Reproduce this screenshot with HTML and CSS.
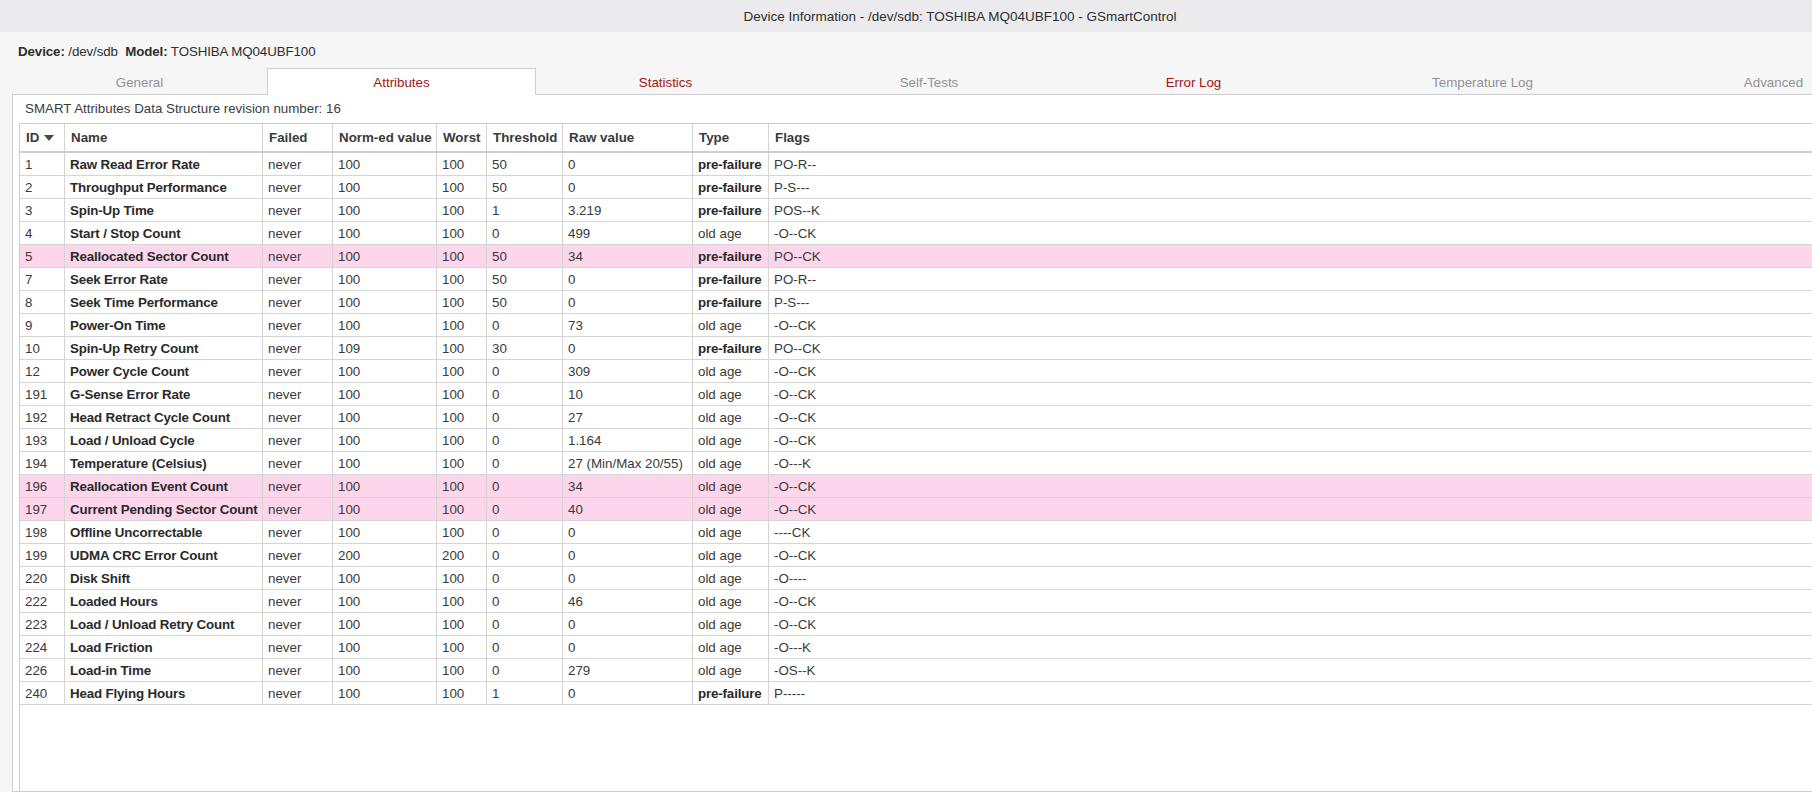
FILE: index.html
```html
<!DOCTYPE html>
<html lang="en">
<head>
<meta charset="utf-8">
<title>Device Information - /dev/sdb: TOSHIBA MQ04UBF100 - GSmartControl</title>
<link rel="stylesheet" href="styles.css">
</head>
<body>
<div class="window">
  <header class="titlebar">Device Information - /dev/sdb: TOSHIBA MQ04UBF100 - GSmartControl</header>
  <div class="devline"><b>Device:</b> /dev/sdb&nbsp; <b>Model:</b> TOSHIBA MQ04UBF100</div>
  <div class="notebook">
    <div class="tabs">
      <div class="tab t-general">General</div>
      <div class="tab t-attr active warn">Attributes</div>
      <div class="tab t-stat warn">Statistics</div>
      <div class="tab t-self">Self-Tests</div>
      <div class="tab t-err warn">Error Log</div>
      <div class="tab t-temp">Temperature Log</div>
      <div class="tab t-adv">Advanced</div>
    </div>
    <div class="page">
      <div class="revision">SMART Attributes Data Structure revision number: 16</div>
      <div class="frame">
        <div class="grid">
          <div class="row head">
            <div class="c">ID <svg class="sort" width="10" height="6" viewBox="0 0 10 6"><path d="M0 0H10L5 6Z" fill="#4a4a4a"/></svg></div>
            <div class="c">Name</div>
            <div class="c">Failed</div>
            <div class="c">Norm-ed value</div>
            <div class="c">Worst</div>
            <div class="c">Threshold</div>
            <div class="c">Raw value</div>
            <div class="c">Type</div>
            <div class="c">Flags</div>
          </div>
          <div class="row"><div class="c">1</div><div class="c b">Raw Read Error Rate</div><div class="c">never</div><div class="c">100</div><div class="c">100</div><div class="c">50</div><div class="c">0</div><div class="c b">pre-failure</div><div class="c">PO-R--</div></div>
          <div class="row"><div class="c">2</div><div class="c b">Throughput Performance</div><div class="c">never</div><div class="c">100</div><div class="c">100</div><div class="c">50</div><div class="c">0</div><div class="c b">pre-failure</div><div class="c">P-S---</div></div>
          <div class="row"><div class="c">3</div><div class="c b">Spin-Up Time</div><div class="c">never</div><div class="c">100</div><div class="c">100</div><div class="c">1</div><div class="c">3.219</div><div class="c b">pre-failure</div><div class="c">POS--K</div></div>
          <div class="row"><div class="c">4</div><div class="c b">Start / Stop Count</div><div class="c">never</div><div class="c">100</div><div class="c">100</div><div class="c">0</div><div class="c">499</div><div class="c">old age</div><div class="c">-O--CK</div></div>
          <div class="row hl"><div class="c">5</div><div class="c b">Reallocated Sector Count</div><div class="c">never</div><div class="c">100</div><div class="c">100</div><div class="c">50</div><div class="c">34</div><div class="c b">pre-failure</div><div class="c">PO--CK</div></div>
          <div class="row"><div class="c">7</div><div class="c b">Seek Error Rate</div><div class="c">never</div><div class="c">100</div><div class="c">100</div><div class="c">50</div><div class="c">0</div><div class="c b">pre-failure</div><div class="c">PO-R--</div></div>
          <div class="row"><div class="c">8</div><div class="c b">Seek Time Performance</div><div class="c">never</div><div class="c">100</div><div class="c">100</div><div class="c">50</div><div class="c">0</div><div class="c b">pre-failure</div><div class="c">P-S---</div></div>
          <div class="row"><div class="c">9</div><div class="c b">Power-On Time</div><div class="c">never</div><div class="c">100</div><div class="c">100</div><div class="c">0</div><div class="c">73</div><div class="c">old age</div><div class="c">-O--CK</div></div>
          <div class="row"><div class="c">10</div><div class="c b">Spin-Up Retry Count</div><div class="c">never</div><div class="c">109</div><div class="c">100</div><div class="c">30</div><div class="c">0</div><div class="c b">pre-failure</div><div class="c">PO--CK</div></div>
          <div class="row"><div class="c">12</div><div class="c b">Power Cycle Count</div><div class="c">never</div><div class="c">100</div><div class="c">100</div><div class="c">0</div><div class="c">309</div><div class="c">old age</div><div class="c">-O--CK</div></div>
          <div class="row"><div class="c">191</div><div class="c b">G-Sense Error Rate</div><div class="c">never</div><div class="c">100</div><div class="c">100</div><div class="c">0</div><div class="c">10</div><div class="c">old age</div><div class="c">-O--CK</div></div>
          <div class="row"><div class="c">192</div><div class="c b">Head Retract Cycle Count</div><div class="c">never</div><div class="c">100</div><div class="c">100</div><div class="c">0</div><div class="c">27</div><div class="c">old age</div><div class="c">-O--CK</div></div>
          <div class="row"><div class="c">193</div><div class="c b">Load / Unload Cycle</div><div class="c">never</div><div class="c">100</div><div class="c">100</div><div class="c">0</div><div class="c">1.164</div><div class="c">old age</div><div class="c">-O--CK</div></div>
          <div class="row"><div class="c">194</div><div class="c b">Temperature (Celsius)</div><div class="c">never</div><div class="c">100</div><div class="c">100</div><div class="c">0</div><div class="c">27 (Min/Max 20/55)</div><div class="c">old age</div><div class="c">-O---K</div></div>
          <div class="row hl"><div class="c">196</div><div class="c b">Reallocation Event Count</div><div class="c">never</div><div class="c">100</div><div class="c">100</div><div class="c">0</div><div class="c">34</div><div class="c">old age</div><div class="c">-O--CK</div></div>
          <div class="row hl"><div class="c">197</div><div class="c b">Current Pending Sector Count</div><div class="c">never</div><div class="c">100</div><div class="c">100</div><div class="c">0</div><div class="c">40</div><div class="c">old age</div><div class="c">-O--CK</div></div>
          <div class="row"><div class="c">198</div><div class="c b">Offline Uncorrectable</div><div class="c">never</div><div class="c">100</div><div class="c">100</div><div class="c">0</div><div class="c">0</div><div class="c">old age</div><div class="c">----CK</div></div>
          <div class="row"><div class="c">199</div><div class="c b">UDMA CRC Error Count</div><div class="c">never</div><div class="c">200</div><div class="c">200</div><div class="c">0</div><div class="c">0</div><div class="c">old age</div><div class="c">-O--CK</div></div>
          <div class="row"><div class="c">220</div><div class="c b">Disk Shift</div><div class="c">never</div><div class="c">100</div><div class="c">100</div><div class="c">0</div><div class="c">0</div><div class="c">old age</div><div class="c">-O----</div></div>
          <div class="row"><div class="c">222</div><div class="c b">Loaded Hours</div><div class="c">never</div><div class="c">100</div><div class="c">100</div><div class="c">0</div><div class="c">46</div><div class="c">old age</div><div class="c">-O--CK</div></div>
          <div class="row"><div class="c">223</div><div class="c b">Load / Unload Retry Count</div><div class="c">never</div><div class="c">100</div><div class="c">100</div><div class="c">0</div><div class="c">0</div><div class="c">old age</div><div class="c">-O--CK</div></div>
          <div class="row"><div class="c">224</div><div class="c b">Load Friction</div><div class="c">never</div><div class="c">100</div><div class="c">100</div><div class="c">0</div><div class="c">0</div><div class="c">old age</div><div class="c">-O---K</div></div>
          <div class="row"><div class="c">226</div><div class="c b">Load-in Time</div><div class="c">never</div><div class="c">100</div><div class="c">100</div><div class="c">0</div><div class="c">279</div><div class="c">old age</div><div class="c">-OS--K</div></div>
          <div class="row"><div class="c">240</div><div class="c b">Head Flying Hours</div><div class="c">never</div><div class="c">100</div><div class="c">100</div><div class="c">1</div><div class="c">0</div><div class="c b">pre-failure</div><div class="c">P-----</div></div>
        </div>
      </div>
    </div>
  </div>
</div>
</body>
</html>
```

FILE: styles.css
```css
html, body {
  margin: 0;
  padding: 0;
  overflow: hidden;
  background: #f6f6f6;
}

body {
  font-family: "Liberation Sans", Arial, sans-serif;
  font-size: 13.33px;
  color: #3d3d3d;
}

.window {
  width: 1920px;
  height: 792px;
  display: flex;
  flex-direction: column;
  background: #f6f6f6;
}

.titlebar {
  height: 32px;
  flex: none;
  display: flex;
  align-items: center;
  justify-content: center;
  background: #ebebed;
  color: #2e2e2e;
  font-size: 13.5px;
}

.devline {
  flex: none;
  height: 36px;
  box-sizing: border-box;
  padding: 12px 0 0 18px;
  line-height: 16px;
  color: #2e2e2e;
  white-space: pre;
  letter-spacing: -0.1px;
}

.devline b {
  font-weight: bold;
}

.notebook {
  flex: 1;
  margin: 0 12px;
  display: flex;
  flex-direction: column;
  min-height: 0;
}

.tabs {
  flex: none;
  display: flex;
  height: 26px;
  position: relative;
  z-index: 1;
}

.tab {
  flex: none;
  box-sizing: border-box;
  height: 26px;
  display: flex;
  align-items: center;
  justify-content: center;
  padding-top: 2px;
  color: #929292;
  white-space: nowrap;
}

.tab.warn {
  color: #a11515;
}

.tab.active {
  height: 27px;
  background: #ffffff;
  border: 1px solid #cdcdcd;
  border-bottom: none;
  padding-top: 1px;
}

.t-general { width: 255px; }
.t-attr { width: 269px; }
.t-stat { width: 259px; }
.t-self { width: 268px; }
.t-err { width: 261px; }
.t-temp { width: 317px; }
.t-adv { width: 265px; }

.page {
  flex: 1;
  min-height: 0;
  background: #ffffff;
  border: 1px solid #cdcdcd;
  display: flex;
  flex-direction: column;
}

.revision {
  flex: none;
  padding: 6px 0 0 12px;
  line-height: 16px;
  height: 16px;
  color: #3d3d3d;
}

.frame {
  flex: 1;
  margin: 6px 6px 0 6px;
  border: 1px solid #cdcdcd;
  border-bottom: none;
  background: #ffffff;
}

.grid {
  display: flex;
  flex-direction: column;
}

.row {
  display: grid;
  grid-template-columns: 45px 198px 70px 104px 50px 76px 130px 76px 1fr;
  height: 23px;
  box-sizing: border-box;
  border-bottom: 1px solid #d5d5d5;
}

.row.hl {
  background: #fdd6ec;
}

.row.head {
  height: 29px;
  border-bottom: 2px solid #cfcfcf;
  font-weight: bold;
  color: #3a3a3a;
}

.c {
  box-sizing: border-box;
  border-right: 1px solid #d5d5d5;
  padding: 0 5px;
  display: flex;
  align-items: center;
  white-space: nowrap;
  overflow: hidden;
  color: #3a3a3a;
}

.row .c:last-child {
  border-right: none;
}

.head .c {
  padding: 0 6px;
}

.c.b {
  font-weight: bold;
  color: #2a2a2a;
  letter-spacing: -0.15px;
}

.sort {
  margin-left: 5px;
  flex: none;
}
```
